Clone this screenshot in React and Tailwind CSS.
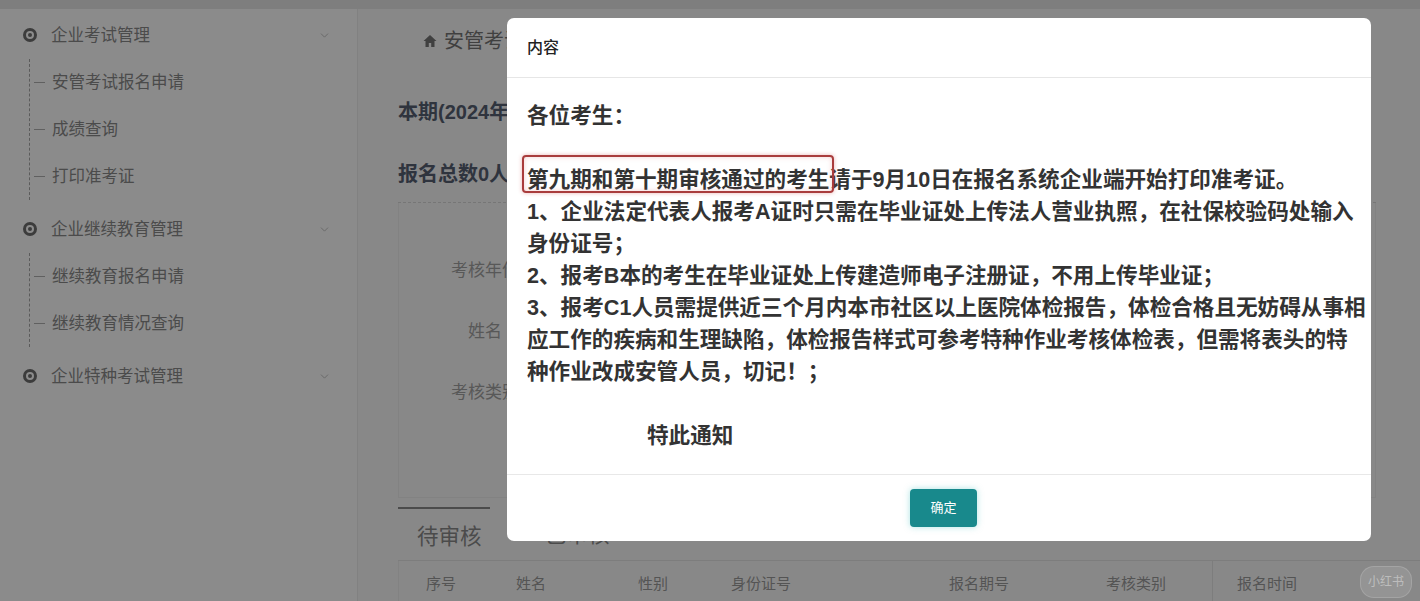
import { ChevronDown } from 'lucide-react'

const menu = [
  { title: '企业考试管理', items: ['安管考试报名申请', '成绩查询', '打印准考证'] },
  { title: '企业继续教育管理', items: ['继续教育报名申请', '继续教育情况查询'] },
  { title: '企业特种考试管理', items: [] },
]

const columns = [
  { label: '序号', w: 'w-[90px]' },
  { label: '姓名', w: 'w-[122px]' },
  { label: '性别', w: 'w-[93px]' },
  { label: '身份证号', w: 'w-[218px]' },
  { label: '报名期号', w: 'w-[157px]' },
  { label: '考核类别', w: 'w-[133px]' },
  { label: '报名时间', w: 'w-[140px]' },
]

function Sidebar() {
  return (
    <aside className="w-[358px] shrink-0 bg-white border-r border-[#ececec] pt-[2px]">
      {menu.map(group => (
        <div key={group.title}>
          <div className="h-[48px] flex items-center pl-[23px] pr-[26px]">
            <span className="w-[14px] h-[14px] rounded-full border-[3px] border-[#6e6e6e] flex items-center justify-center">
              <span className="w-[4px] h-[4px] rounded-full bg-[#6e6e6e]" />
            </span>
            <span className="ml-[14px] text-[16.5px] text-[#8a8a8a]">{group.title}</span>
            <ChevronDown size={13} strokeWidth={1.5} className="ml-auto text-[#b4b4b4]" />
          </div>
          {group.items.length > 0 && (
            <div className="ml-[29px] mb-[5px] border-l border-dashed border-[#a8a8a8]">
              {group.items.map(item => (
                <div key={item} className="h-[47px] flex items-center">
                  <span className="w-[11px] h-px bg-[#b0b0b0] ml-[4px]" />
                  <span className="ml-[7px] text-[16.5px] text-[#8a8a8a]">{item}</span>
                </div>
              ))}
            </div>
          )}
        </div>
      ))}
    </aside>
  )
}

function Main() {
  return (
    <main className="flex-1 bg-[#fafafa] pl-[40px]">
      <div className="h-[28px] mt-[18px] flex items-center pl-[25px] text-[20px] text-[#767676]">
        <svg width="14" height="14" viewBox="0 0 14 14" className="mr-[7px]">
          <path d="M7 1 L0.5 7 H2.5 V13 H5.8 V9 H8.2 V13 H11.5 V7 H13.5 Z" fill="currentColor" />
        </svg>
        安管考试报名申请
      </div>
      <div className="mt-[43px] h-[28px] leading-[28px] text-[20px] font-bold text-[#566072]">本期(2024年第十期)考试</div>
      <div className="mt-[34px] h-[28px] leading-[28px] text-[20px] font-bold text-[#566072]">报名总数0人</div>
      <div className="mt-[14px] mr-[44px] border-t border-dashed border-[#d8d8d8]" />
      <div className="mr-[44px] h-[295px] border border-[#eeeeee] border-t-0 pt-[48px]">
        {['考核年份', '姓名', '考核类别'].map(label => (
          <div key={label} className="h-[40px] mb-[21px] flex items-center">
            <span className="w-[166px] pl-[6px] text-center text-[17px] text-[#a2a2a2]">{label}</span>
            <span className="h-[36px] w-[280px] ml-[10px] border border-[#e2e2e2] bg-white" />
          </div>
        ))}
      </div>
      <div className="mt-[9px] flex items-end h-[54px] border-b border-[#e6e6e6]">
        <div className="w-[92px] h-full border-t-2 border-[#8a8a8a] pl-[19px] pt-[12px] text-[21.5px] text-[#8a8a8a]">待审核</div>
        <div className="ml-[55px] h-full pt-[12px] text-[21.5px] text-[#8a8a8a]">已审核</div>
      </div>
      <div className="flex h-[46px] items-center border-l border-[#eeeeee] text-[15px] text-[#9a9a9a]">
        {columns.map((c, i) => (
          <div key={c.label} className={`${c.w} h-full flex items-center ${i === 6 ? 'border-l border-[#e6e6e6] pl-[24px]' : 'pl-[27px]'}`}>
            {c.label}
          </div>
        ))}
      </div>
    </main>
  )
}

function Notice() {
  return (
    <div className="absolute left-[507px] top-[18px] w-[864px] h-[523px] rounded-[7px] bg-white flex flex-col">
      <div className="h-[60px] shrink-0 flex items-center px-[20px] border-b border-[#e6e6e6] text-[16px] font-medium text-[#222]">内容</div>
      <div className="flex-1 px-[20px] py-[22px] text-[21.6px] leading-[32px] font-bold text-[#333] whitespace-nowrap">
        <p>各位考生：</p>
        <p className="h-[32px]" />
        <p>
          <span className="relative">
            第九期和第十期审核通过的考生
            <span className="absolute -left-[5px] -right-[5px] -top-[12px] -bottom-[1px] rounded-[4px] border-2 border-[#a93c3c] shadow-[0_0_4px_rgba(210,90,90,0.45),inset_0_0_5px_rgba(220,120,120,0.35)]" />
          </span>
          请于9月10日在报名系统企业端开始打印准考证。
        </p>
        <p>
          1、企业法定代表人报考A证时只需在毕业证处上传法人营业执照，在社保校验码处输入
          <br />
          身份证号；
        </p>
        <p>2、报考B本的考生在毕业证处上传建造师电子注册证，不用上传毕业证；</p>
        <p>
          3、报考C1人员需提供近三个月内本市社区以上医院体检报告，体检合格且无妨碍从事相
          <br />
          应工作的疾病和生理缺陷，体检报告样式可参考特种作业考核体检表，但需将表头的特
          <br />
          种作业改成安管人员，切记！；
        </p>
        <p className="h-[32px]" />
        <p className="pl-[120px]">特此通知</p>
      </div>
      <div className="h-[67px] shrink-0 border-t border-[#e8e8e8] flex items-center justify-center pl-[9px]">
        <button className="w-[67px] h-[38px] rounded-[4px] bg-[#18898c] text-white text-[13px] shadow-[0_0_6px_rgba(90,200,200,0.5)]">
          确定
        </button>
      </div>
    </div>
  )
}

export default function App() {
  return (
    <div className="relative w-[1420px] h-[601px] overflow-hidden bg-white font-['Liberation_Sans','Noto_Sans_CJK_SC',sans-serif]">
      <div className="h-[9px] bg-[#e8e8e8]" />
      <div className="flex h-[592px]">
        <Sidebar />
        <Main />
      </div>
      <div className="absolute inset-0 bg-black/[0.455]" />
      <Notice />
      <div className="absolute left-[1360px] top-[566px] w-[52px] h-[32px] rounded-[14px] bg-white/10 border border-white/15 flex items-center justify-center text-[12px] text-white/40">
        小红书
      </div>
    </div>
  )
}
